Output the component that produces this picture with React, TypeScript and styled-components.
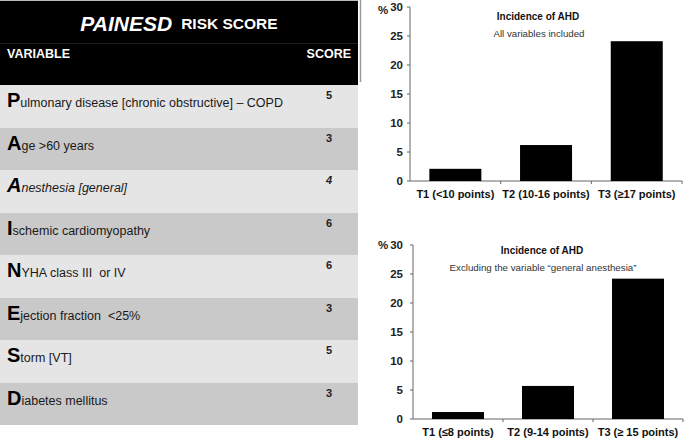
import React from "react"
import styled, { createGlobalStyle } from "styled-components"

const GlobalStyle = createGlobalStyle`
  html, body {
    margin: 0;
    padding: 0;
    background: #fff;
  }
  body {
    font-family: "Liberation Sans", Arial, sans-serif;
    color: #111;
  }
`

const Page = styled.div`
  display: flex;
  width: 685px;
  height: 438px;
  overflow: hidden;
`

/* ---------- risk score table ---------- */

const Table = styled.div`
  width: 358px;
  flex: none;
  display: flex;
  flex-direction: column;
`

const Header = styled.div`
  height: 85px;
  background: #000;
  color: #fff;
  display: flex;
  flex-direction: column;
  border-top: 1px solid #bbb;
  box-sizing: border-box;
`

const Title = styled.div`
  height: 43px;
  box-sizing: border-box;
  padding-top: 3px;
  border-bottom: 1px solid #1e1e1e;
  display: flex;
  align-items: center;
  justify-content: center;
  gap: 9px;
  font-weight: bold;
`

const TitleMain = styled.span`
  font-size: 21px;
  font-style: italic;
`

const TitleSub = styled.span`
  font-size: 15.5px;
`

const ColumnHeads = styled.div`
  display: flex;
  justify-content: space-between;
  padding: 3px 7px 0;
  font-size: 12.5px;
  font-weight: bold;
`

const Row = styled.div<{ $dark: boolean }>`
  height: 42.5px;
  background: ${(p) => (p.$dark ? "#c9c9c9" : "#e5e5e5")};
  display: flex;
  justify-content: space-between;
  align-items: flex-start;
  padding: 0 7px;
`

const Variable = styled.div<{ $italic?: boolean }>`
  padding-top: 5px;
  font-size: 12.5px;
  line-height: 1;
  white-space: pre;
  font-style: ${(p) => (p.$italic ? "italic" : "normal")};
  color: #1a1a1a;
`

const Initial = styled.span`
  font-size: 20px;
  font-weight: bold;
  color: #000;
`

const Score = styled.div<{ $italic?: boolean }>`
  width: 44px;
  padding-top: 4px;
  text-align: center;
  font-size: 11px;
  font-weight: bold;
  font-style: ${(p) => (p.$italic ? "italic" : "normal")};
  color: #222;
`

const variables = [
  { initial: "P", rest: "ulmonary disease [chronic obstructive] – COPD", score: 5 },
  { initial: "A", rest: "ge >60 years", score: 3 },
  { initial: "A", rest: "nesthesia [general]", score: 4, italic: true },
  { initial: "I", rest: "schemic cardiomyopathy", score: 6 },
  { initial: "N", rest: "YHA class III  or IV", score: 6 },
  { initial: "E", rest: "jection fraction  <25%", score: 3 },
  { initial: "S", rest: "torm [VT]", score: 5 },
  { initial: "D", rest: "iabetes mellitus", score: 3 },
]

/* ---------- charts ---------- */

const Charts = styled.div`
  flex: 1;
  display: flex;
  flex-direction: column;
`

const ChartSvg = styled.svg`
  display: block;
  font-family: "Liberation Sans", Arial, sans-serif;
`

const ChartTitle = styled.text`
  font-size: 10px;
  font-weight: bold;
  fill: #111;
`

const ChartSubtitle = styled.text`
  font-size: 9px;
  fill: #333;
`

const TickLabel = styled.text`
  font-size: 11.5px;
  font-weight: bold;
  fill: #222;
`

const CategoryLabel = styled.text`
  font-size: 11px;
  font-weight: bold;
  fill: #111;
`

interface BarDatum {
  label: string
  value: number
}

interface ChartProps {
  subtitle: string
  subtitleWidth: number
  bars: BarDatum[]
  axisX: number
  top: number
  bottom: number
  catWidth: number
  titleY: number
  titleX: number
  labelY: number
  percentDy: number
  edge?: boolean
}

const Chart = ({
  subtitle,
  subtitleWidth,
  bars,
  axisX,
  top,
  bottom,
  catWidth,
  titleY,
  titleX,
  labelY,
  percentDy,
  edge,
}: ChartProps) => {
  const scale = (bottom - top) / 30
  const ticks = [0, 5, 10, 15, 20, 25, 30]
  const right = axisX + catWidth * bars.length
  const axisColor = "#666"

  return (
    <ChartSvg width={327} height={219} viewBox="0 0 327 219">
      {edge && <line x1={2.5} y1={0} x2={2.5} y2={82} stroke="#9a9a9a" strokeWidth={1.5} />}
      <ChartTitle x={titleX} y={titleY} textAnchor="middle">
        Incidence of AHD
      </ChartTitle>
      <ChartSubtitle
        x={titleX + 1}
        y={titleY + 17}
        textAnchor="middle"
        textLength={subtitleWidth}
        lengthAdjust="spacingAndGlyphs"
      >
        {subtitle}
      </ChartSubtitle>

      <line x1={axisX} y1={top} x2={axisX} y2={bottom} stroke={axisColor} />
      <line x1={axisX} y1={bottom} x2={right} y2={bottom} stroke={axisColor} />

      {ticks.map((t) => {
        const y = bottom - t * scale
        return (
          <g key={t}>
            <line x1={axisX - 3} y1={y} x2={axisX} y2={y} stroke={axisColor} />
            <TickLabel x={45} y={y + 4} textAnchor="end">
              {t}
            </TickLabel>
          </g>
        )
      })}
      <TickLabel x={20} y={top + 4 + percentDy}>
        %
      </TickLabel>

      {bars.map((b, i) => {
        const x0 = axisX + catWidth * i
        const center = x0 + catWidth / 2
        const h = b.value * scale
        return (
          <g key={b.label}>
            <line
              x1={x0 + catWidth}
              y1={bottom}
              x2={x0 + catWidth}
              y2={bottom + 3}
              stroke={axisColor}
            />
            <rect x={center - 26} y={bottom - h} width={52} height={h} fill="#000" />
            <CategoryLabel x={center} y={labelY} textAnchor="middle">
              {b.label}
            </CategoryLabel>
          </g>
        )
      })}
    </ChartSvg>
  )
}

const App = () => {
  return (
    <>
      <GlobalStyle />
      <Page>
        <Table>
          <Header>
            <Title>
              <TitleMain>PAINESD</TitleMain>
              <TitleSub>RISK SCORE</TitleSub>
            </Title>
            <ColumnHeads>
              <span>VARIABLE</span>
              <span>SCORE</span>
            </ColumnHeads>
          </Header>
          {variables.map((v, i) => (
            <Row key={i} $dark={i % 2 === 1}>
              <Variable $italic={v.italic}>
                <Initial>{v.initial}</Initial>
                {v.rest}
              </Variable>
              <Score $italic={v.italic}>{v.score}</Score>
            </Row>
          ))}
        </Table>

        <Charts>
          <Chart
            subtitle="All variables included"
            subtitleWidth={91}
            bars={[
              { label: "T1 (<10 points)", value: 2.1 },
              { label: "T2 (10-16 points)", value: 6.2 },
              { label: "T3 (≥17 points)", value: 24.1 },
            ]}
            axisX={52}
            top={7}
            bottom={181}
            catWidth={90.7}
            titleX={180}
            titleY={19.5}
            labelY={198}
            percentDy={3}
            edge
          />
          <Chart
            subtitle="Excluding the variable “general anesthesia”"
            subtitleWidth={187}
            bars={[
              { label: "T1 (≤8 points)", value: 1.2 },
              { label: "T2 (9-14 points)", value: 5.7 },
              { label: "T3 (≥ 15 points)", value: 24.2 },
            ]}
            axisX={55}
            top={26}
            bottom={200}
            catWidth={90}
            titleX={184}
            titleY={35}
            labelY={217}
            percentDy={0}
          />
        </Charts>
      </Page>
    </>
  )
}

export default App
